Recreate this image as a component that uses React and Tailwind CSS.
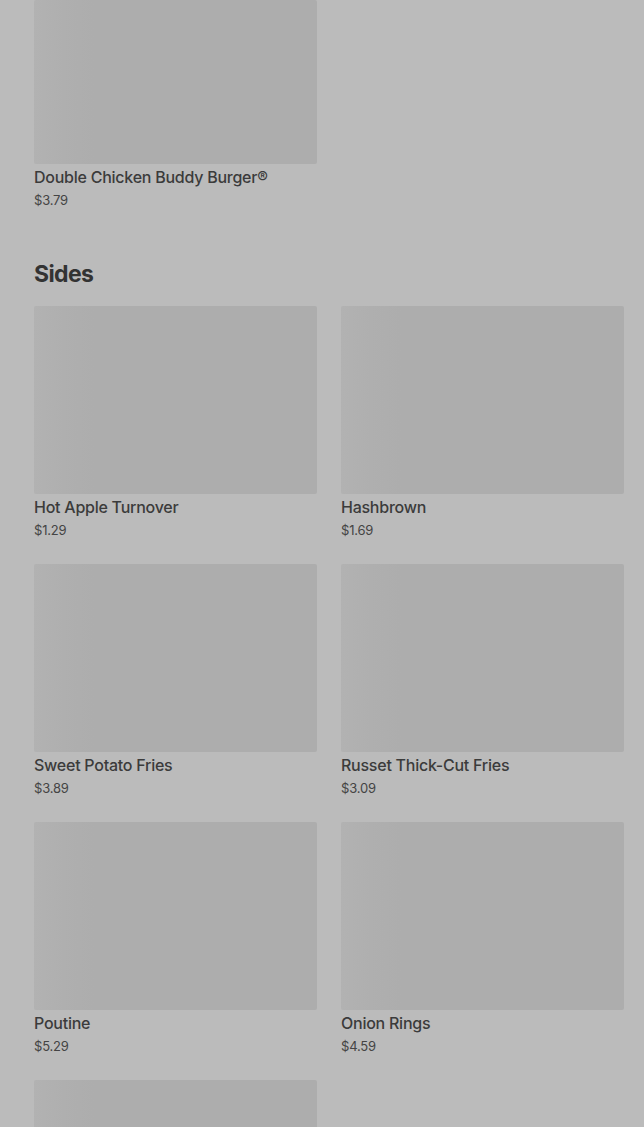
import React from "react";

const sides = [
  { name: "Hot Apple Turnover", price: "$1.29" },
  { name: "Hashbrown", price: "$1.69" },
  { name: "Sweet Potato Fries", price: "$3.89" },
  { name: "Russet Thick-Cut Fries", price: "$3.09" },
  { name: "Poutine", price: "$5.29" },
  { name: "Onion Rings", price: "$4.59" },
  { name: "", price: "" },
];

function Thumb({ h = "h-[188px]" }) {
  return (
    <div
      className={`${h} w-full rounded-[2px] bg-[#adadad] bg-[linear-gradient(90deg,#b2b2b2_0px,#afafaf_30px,#adadad_60px)]`}
    />
  );
}

function Item({ name, price, top }) {
  return (
    <div className="flex flex-col">
      <Thumb h={top ? "h-[164px]" : "h-[188px]"} />
      {name && (
        <>
          <div className="mt-[3px] text-[16px] leading-[20px] font-medium tracking-[-0.25px] text-[#3b3b3b]">{name}</div>
          <div className="mt-[3px] text-[13px] leading-[20px] tracking-[-0.2px] text-[#444]">{price}</div>
        </>
      )}
    </div>
  );
}

export default function App() {
  return (
    <div
      className="min-h-[1127px] w-full overflow-hidden bg-[#bbbbbb] pl-[34px] pr-[20px]"
      style={{ fontFamily: "Inter, 'Noto Sans', sans-serif" }}
    >
      <div className="grid grid-cols-2 gap-x-[24px]">
        <Item name="Double Chicken Buddy Burger®" price="$3.79" top />
      </div>

      <h2 className="mt-[50px] text-[23px] leading-[28px] font-bold tracking-[-0.6px] text-[#333]">Sides</h2>

      <div className="mt-[18px] grid grid-cols-2 gap-x-[24px] gap-y-[24px]">
        {sides.map((s, i) => (
          <Item key={i} name={s.name} price={s.price} />
        ))}
      </div>
    </div>
  );
}
